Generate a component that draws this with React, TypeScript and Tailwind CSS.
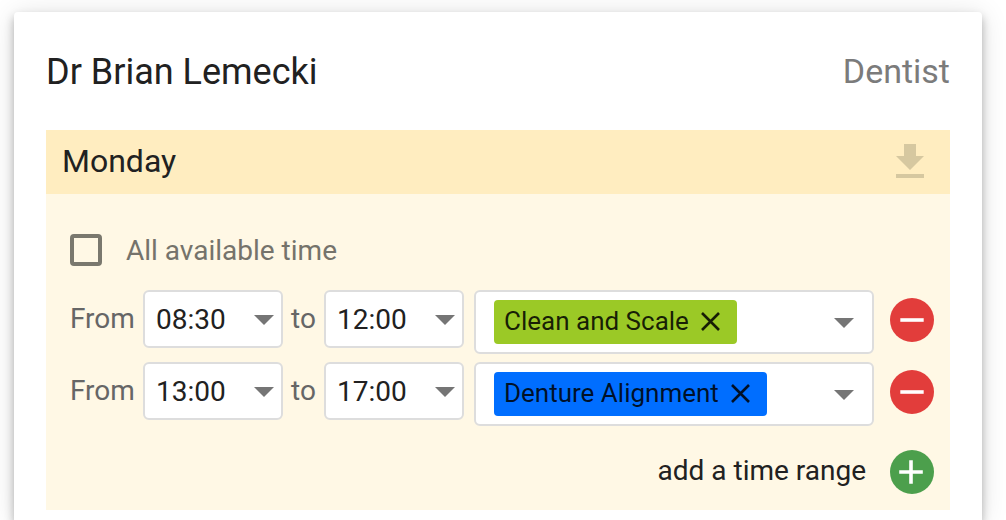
import { useState } from "react";

type Range = {
  id: number;
  from: string;
  to: string;
  service: string | null;
  color: string;
};

const TIMES = ["08:00", "08:30", "09:00", "12:00", "13:00", "17:00", "18:00"];

function Caret({ className = "" }: { className?: string }) {
  return (
    <svg aria-hidden="true" viewBox="0 0 20 10" className={`h-[10px] w-5 fill-[#757575] ${className}`}>
      <path d="M0 0h20L10 10z" />
    </svg>
  );
}

function TimeSelect({ label, value, onChange }: { label: string; value: string; onChange: (v: string) => void }) {
  return (
    <div className="relative w-[140px] shrink-0">
      <select
        aria-label={label}
        value={value}
        onChange={(e) => onChange(e.target.value)}
        className="h-[58px] w-full appearance-none rounded-md border-2 border-[#dddddd] bg-white pt-[2px] pl-[11px] text-[28px] text-[#212121]"
      >
        {TIMES.map((t) => (
          <option key={t}>{t}</option>
        ))}
      </select>
      <Caret className="pointer-events-none absolute top-[25px] right-[9px]" />
    </div>
  );
}

export default function App() {
  const [allTime, setAllTime] = useState(false);
  const [ranges, setRanges] = useState<Range[]>([
    { id: 1, from: "08:30", to: "12:00", service: "Clean and Scale", color: "bg-[#9bc926]" },
    { id: 2, from: "13:00", to: "17:00", service: "Denture Alignment", color: "bg-[#006eff]" },
  ]);

  const update = (id: number, patch: Partial<Range>) =>
    setRanges((rs) => rs.map((r) => (r.id === id ? { ...r, ...patch } : r)));

  return (
    <main className="flex min-h-screen flex-col bg-white pt-3 pr-6 pl-[14px] font-['Roboto',sans-serif] text-[#212121]">
      <section className="flex-1 rounded-t bg-white px-8 pb-[10px] shadow-[0_5px_10px_rgba(0,0,0,0.28),0_2px_28px_rgba(0,0,0,0.12)]">
        <header className="flex h-[118px] items-start justify-between pt-10">
          <h1 className="text-[36px] leading-10">Dr Brian Lemecki</h1>
          <p className="text-[34px] leading-[38px] text-[#7b7b7b]">Dentist</p>
        </header>

        <div className="bg-[#fff8e5]">
          <div className="flex h-16 items-center justify-between bg-[#ffedc0] pr-5 pb-[2px] pl-4">
            <h2 className="text-[32px] leading-10">Monday</h2>
            <button type="button" aria-label="Copy down" className="flex w-10 justify-center">
              <svg aria-hidden="true" viewBox="0 0 28 34" className="h-[34px] w-7 fill-[#d6c8a0]">
                <path d="M8 0h12v12h8L14 26 0 12h8zM0 30h28v4H0z" />
              </svg>
            </button>
          </div>

          <div className="px-4 pt-8 pb-4">
            <label className="flex h-12 items-center gap-6 pl-2 text-[28px] text-[#75736b]">
              <input
                type="checkbox"
                checked={allTime}
                onChange={(e) => setAllTime(e.target.checked)}
                className="size-8 appearance-none rounded border-4 border-[#7a786e] checked:bg-[#7a786e]"
              />
              <span className="pt-[2px]">All available time</span>
            </label>

            <div className="mt-4 flex flex-col gap-2">
              {ranges.map((r) => (
                <div key={r.id} className="flex items-start">
                  <span className="mr-2 w-[73px] shrink-0 pl-2 text-[28px] leading-[58px] whitespace-nowrap text-[#666666]">From</span>
                  <TimeSelect label="From" value={r.from} onChange={(from) => update(r.id, { from })} />
                  <span className="w-[41px] shrink-0 text-center text-[28px] leading-[58px] text-[#666666]">to</span>
                  <TimeSelect label="To" value={r.to} onChange={(to) => update(r.id, { to })} />
                  <div className="ml-[10px] flex h-16 flex-1 items-center justify-between rounded-md border-2 border-[#dddddd] bg-white px-[18px]">
                    {r.service ? (
                      <span className={`flex h-11 items-center gap-3 rounded pr-4 pb-[2px] pl-[10px] text-[26px] whitespace-nowrap text-black/85 ${r.color}`}>
                        {r.service}
                        <button type="button" aria-label={`Remove ${r.service}`} onClick={() => update(r.id, { service: null })}>
                          <svg aria-hidden="true" viewBox="0 0 20 20" className="size-5 stroke-current" strokeWidth="2.6" fill="none">
                            <path d="M1 2l17 17M18 2L1 19" />
                          </svg>
                        </button>
                      </span>
                    ) : (
                      <span />
                    )}
                    <button type="button" aria-label="Choose services" className="pt-[2px]">
                      <Caret />
                    </button>
                  </div>
                  <button
                    type="button"
                    aria-label="Remove time range"
                    onClick={() => setRanges((rs) => rs.filter((x) => x.id !== r.id))}
                    className="mt-2 ml-4 size-11 shrink-0 rounded-full bg-[#e23d3b]"
                  >
                    <svg aria-hidden="true" viewBox="0 0 44 44" className="size-11 fill-white">
                      <path d="M10.3 20.2h23.4v3.6H10.3z" />
                    </svg>
                  </button>
                </div>
              ))}
            </div>

            <div className="mt-6 flex items-center justify-end gap-6">
              <span id="add-range" className="pb-[2px] text-[28px] leading-10">add a time range</span>
              <button
                type="button"
                aria-labelledby="add-range"
                onClick={() => setRanges((rs) => [...rs, { id: Date.now(), from: "09:00", to: "12:00", service: null, color: "" }])}
                className="size-11 shrink-0 rounded-full bg-[#4c9f4c]"
              >
                <svg aria-hidden="true" viewBox="0 0 44 44" className="size-11 fill-white">
                  <path d="M19.2 10.2h3.6v10h10v3.6h-10v10h-3.6v-10h-10v-3.6h10z" />
                </svg>
              </button>
            </div>
          </div>
        </div>
      </section>
    </main>
  );
}
